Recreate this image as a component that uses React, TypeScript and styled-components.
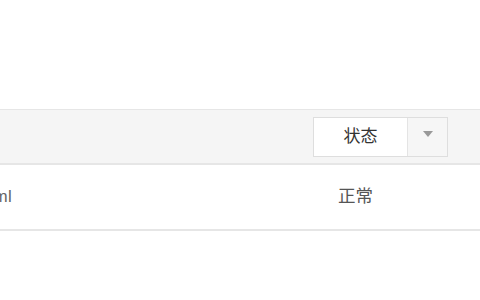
import React from "react";
import styled, { createGlobalStyle } from "styled-components";

const GlobalStyle = createGlobalStyle`
  html, body {
    margin: 0;
    padding: 0;
    background: #fff;
    overflow: hidden;
  }
  body {
    font-family: "Liberation Sans", "Noto Sans CJK SC", sans-serif;
  }
`;

const Page = styled.div`
  width: 480px;
  height: 300px;
  padding-top: 109px;
  box-sizing: border-box;
  overflow: hidden;
`;

// the table is wider than the window; its first column sits off to the left
const Table = styled.div`
  margin-left: -300px;
  width: 780px;
  border-top: 1px solid #e6e6e6;
`;

const HeaderRow = styled.div`
  display: flex;
  align-items: center;
  height: 53px;
  background: #f5f5f5;
  border-bottom: 2px solid #e6e6e6;
`;

const BodyRow = styled.div`
  display: flex;
  align-items: center;
  height: 64px;
  border-bottom: 2px solid #e6e6e6;
`;

const Cell = styled.div<{ $width: number; $align?: string }>`
  flex: 0 0 ${(p) => p.$width}px;
  box-sizing: border-box;
  text-align: ${(p) => p.$align || "left"};
  font-size: 16px;
  color: #555;
  white-space: nowrap;
  overflow: hidden;
`;

const NameCell = styled(Cell)`
  font-size: 17px;
  color: #666;
  letter-spacing: 0.3px;
`;

const StatusCell = styled(Cell)`
  padding-left: 25px;
  padding-bottom: 5px;
  font-size: 17.5px;
  color: #555;
`;

const Select = styled.div`
  display: flex;
  width: 135px;
  height: 40px;
  border: 1px solid #dedede;
  box-sizing: border-box;
  background: #fff;
`;

const SelectLabel = styled.div`
  flex: 0 0 93px;
  display: flex;
  align-items: center;
  justify-content: center;
  font-size: 17px;
  color: #333;
  border-right: 1px solid #e4e4e4;
  padding-bottom: 5px;
`;

const SelectArrow = styled.div`
  flex: 1;
  display: flex;
  align-items: center;
  justify-content: center;
  background: #f6f6f6;
  padding-bottom: 6px;
`;

const Caret = styled.span`
  width: 0;
  height: 0;
  border-left: 5px solid transparent;
  border-right: 5px solid transparent;
  border-top: 6px solid #999;
`;

export default function App() {
  return (
    <Page>
      <GlobalStyle />
      <Table>
        <HeaderRow>
          <Cell $width={613} />
          <Select>
            <SelectLabel>状态</SelectLabel>
            <SelectArrow>
              <Caret />
            </SelectArrow>
          </Select>
        </HeaderRow>
        <BodyRow>
          <NameCell $width={312} $align="right">index.html</NameCell>
          <Cell $width={301} />
          <StatusCell $width={167}>正常</StatusCell>
        </BodyRow>
      </Table>
    </Page>
  );
}
